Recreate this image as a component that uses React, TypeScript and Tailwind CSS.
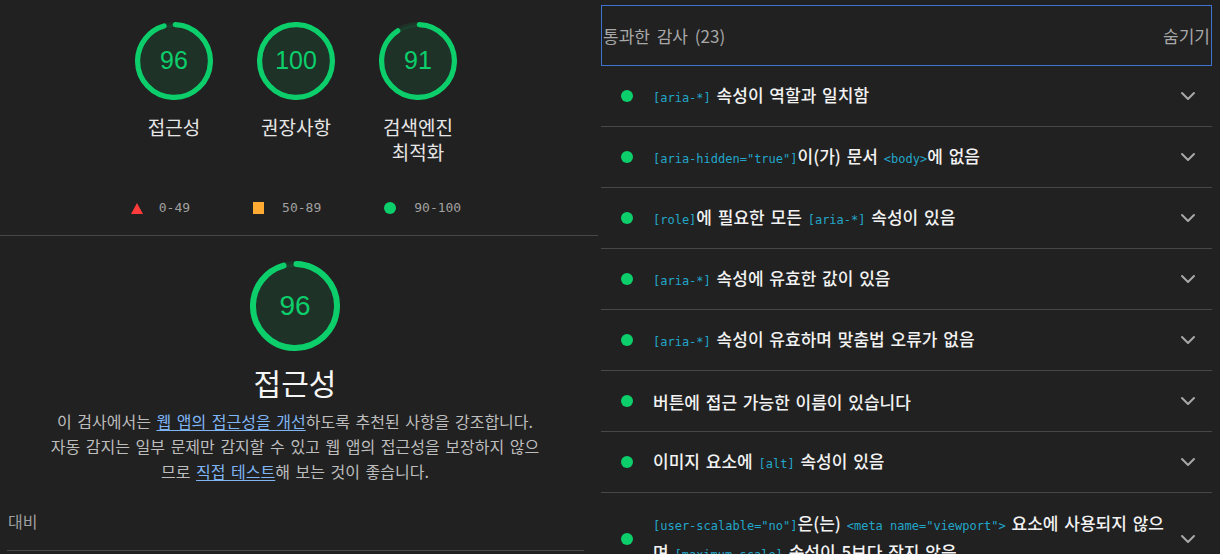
import React from 'react';
import { ChevronDown } from 'lucide-react';

// Lighthouse-style gauge ring, r=56 in a 120 box
const Gauge: React.FC<{ score: number; size: number; textClass: string }> = ({ score, size, textClass }) => {
  const r = 56;
  const sw = 8;
  const c = 2 * Math.PI * r;
  const adj = (0.25 * sw) / c;
  let arc = (c * score) / 100 - sw / 2;
  if (score === 100) arc = c;

  return (
    <div className="relative shrink-0" style={{ width: size, height: size }}>
      <svg viewBox="0 0 120 120" width={size} height={size}>
        <circle cx="60" cy="60" r={r} fill="#0cce6b" fillOpacity={0.1} stroke="#0cce6b" strokeOpacity={0.1} strokeWidth={sw} />
        <circle
          cx="60"
          cy="60"
          r={r}
          fill="none"
          stroke="#0cce6b"
          strokeWidth={sw}
          strokeLinecap="round"
          strokeDasharray={`${arc} ${c}`}
          transform={`rotate(${-90 + adj * 360} 60 60)`}
        />
      </svg>
      <div className={`absolute inset-0 flex items-center justify-center font-['Liberation_Sans',sans-serif] text-[#0cce6b] ${textClass}`}>
        {score}
      </div>
    </div>
  );
};

const Code: React.FC<{ children: React.ReactNode }> = ({ children }) => (
  <span className="font-['DejaVu_Sans_Mono',monospace] text-[12px] font-normal text-[#22a6c9] [word-spacing:0px]">{children}</span>
);

const audits: React.ReactNode[] = [
  <><Code>[aria-*]</Code> 속성이 역할과 일치함</>,
  <><Code>[aria-hidden="true"]</Code>이(가) 문서 <Code>&lt;body&gt;</Code>에 없음</>,
  <><Code>[role]</Code>에 필요한 모든 <Code>[aria-*]</Code> 속성이 있음</>,
  <><Code>[aria-*]</Code> 속성에 유효한 값이 있음</>,
  <><Code>[aria-*]</Code> 속성이 유효하며 맞춤법 오류가 없음</>,
  <>버튼에 접근 가능한 이름이 있습니다</>,
  <>이미지 요소에 <Code>[alt]</Code> 속성이 있음</>,
];

const App: React.FC = () => {
  return (
    <div className="flex h-[554px] w-[1220px] overflow-hidden bg-[#212121] font-['Noto_Sans_CJK_KR',sans-serif]">
      {/* Left: scores */}
      <div className="w-[598px] shrink-0">
        <div className="border-b border-[#474747] pb-[17px] pt-[22px]">
          <div className="flex justify-center gap-[22px] pr-[6px]">
            {[
              { score: 96, label: '접근성' },
              { score: 100, label: '권장사항' },
              { score: 91, label: '검색엔진 최적화' },
            ].map((g) => (
              <div key={g.label} className="flex w-[100px] flex-col items-center">
                <Gauge score={g.score} size={78} textClass="text-[25px]" />
                <div className="mt-[14px] break-keep text-center text-[19px] leading-[25px] text-[#e6e6e6]">{g.label}</div>
              </div>
            ))}
          </div>
          <div className="mt-[34px] flex h-[20px] items-center justify-center gap-[63px] pr-[6px] font-['DejaVu_Sans_Mono',monospace] text-[13px] text-[#a0a0a0]">
            <div className="flex items-center gap-[16px]">
              <svg width="12" height="11" viewBox="0 0 12 11"><polygon points="6,0 12,11 0,11" fill="#ff3b3b" /></svg>
              <span>0-49</span>
            </div>
            <div className="flex items-center gap-[18px]">
              <div className="h-[12px] w-[11px] bg-[#ffab33]" />
              <span>50-89</span>
            </div>
            <div className="flex items-center gap-[18px]">
              <div className="h-[12px] w-[12px] rounded-full bg-[#0cce6b]" />
              <span>90-100</span>
            </div>
          </div>
        </div>

        <div className="flex flex-col items-center pr-[8px] pt-[25px]">
          <Gauge score={96} size={90} textClass="text-[28px]" />
          <div className="mt-[13px] text-[30px] leading-[36px] text-[#f5f5f5]">접근성</div>
          <p className="mt-[9px] whitespace-nowrap text-center text-[16px] leading-[25px] text-[#bdbdbd] [word-spacing:2px]">
            이 검사에서는 <a className="text-[#7fb5f5] underline underline-offset-2">웹 앱의 접근성을 개선</a>하도록 추천된 사항을 강조합니다.
            <br />
            자동 감지는 일부 문제만 감지할 수 있고 웹 앱의 접근성을 보장하지 않으
            <br />
            므로 <a className="text-[#7fb5f5] underline underline-offset-2">직접 테스트</a>해 보는 것이 좋습니다.
          </p>
        </div>
        <div className="ml-[7px] mt-[25px] w-[577px] border-b border-[#474747] pb-[17px] pl-[1px] text-[16px] leading-[24px] text-[#a0a0a0]">
          대비
        </div>
      </div>

      {/* Right: passed audits */}
      <div className="ml-[3px] w-[611px] shrink-0 pt-[5px]">
        <div className="flex h-[61px] items-center justify-between border border-[#3e74d0] px-[1px] text-[17px] text-[#a8a8a8] [word-spacing:3px]">
          <span>통과한 감사 (23)</span>
          <span>숨기기</span>
        </div>
        {audits.map((a, i) => (
          <div key={i} className="flex h-[61px] items-center border-b border-[#474747] pl-[20px] pr-[12px]">
            <div className="h-[12px] w-[12px] shrink-0 rounded-full bg-[#0cce6b]" />
            <div className="ml-[20px] flex-1 text-[17px] font-medium leading-[25px] text-[#f2f2f2] [word-spacing:2px]">{a}</div>
            <ChevronDown size={24} strokeWidth={2} className="shrink-0 text-[#a8a8a8]" />
          </div>
        ))}
        <div className="flex items-center border-b border-[#474747] py-[17px] pl-[20px] pr-[12px]">
          <div className="h-[12px] w-[12px] shrink-0 rounded-full bg-[#0cce6b]" />
          <div className="ml-[20px] flex-1 whitespace-nowrap text-[17px] font-medium leading-[25px] text-[#f2f2f2] [word-spacing:2px]">
            <Code>[user-scalable="no"]</Code>은(는) <Code>&lt;meta name="viewport"&gt;</Code> 요소에 사용되지 않으
            <br />
            며 <Code>[maximum-scale]</Code> 속성이 5보다 작지 않음
          </div>
          <ChevronDown size={24} strokeWidth={2} className="shrink-0 text-[#a8a8a8]" />
        </div>
      </div>
    </div>
  );
};

export default App;
